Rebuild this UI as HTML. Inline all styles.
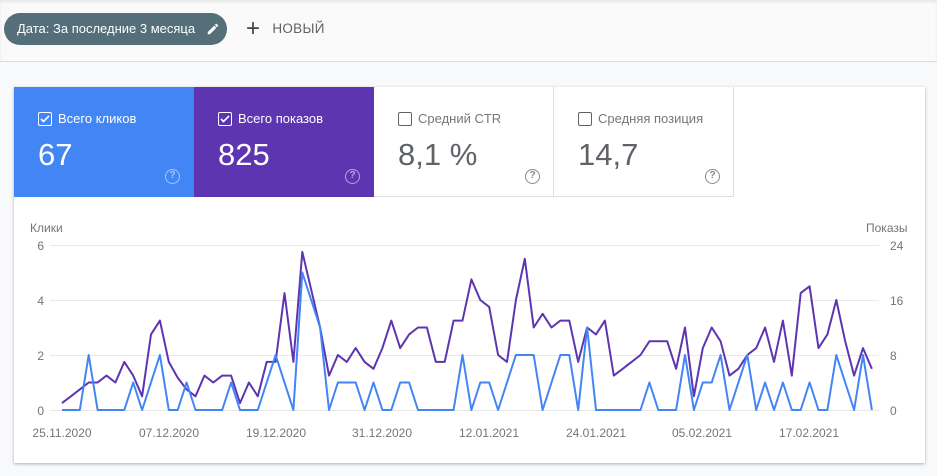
<!DOCTYPE html>
<html><head><meta charset="utf-8"><style>
*{box-sizing:border-box;margin:0;padding:0}
body{width:937px;height:476px;background:#f8f9fa;font-family:"Liberation Sans",sans-serif;position:relative;overflow:hidden}
.top{position:absolute;left:0;top:0;width:937px;height:62px;background:#fafafa;border-bottom:1px solid #dadce0;box-shadow:inset 0 2px 3px rgba(0,0,0,.08)}
.chip{position:absolute;left:4px;top:13px;width:223px;height:32px;border-radius:16px;background:#546e7a;color:#fff;font-size:13px;line-height:32px;padding-left:13px}
.new{position:absolute;left:246px;top:13px;line-height:32px;font-size:13.5px;color:#5f6368;letter-spacing:.3px}
.card{position:absolute;left:14px;top:87px;width:911px;height:376px;background:#fff;box-shadow:0 1px 3px rgba(0,0,0,.3)}
.tile{position:absolute;top:0;width:180px;height:110px}
.cb{position:absolute;left:24px;top:25px;width:14px;height:14px;border:1.5px solid #fff;border-radius:2px}
.lab{position:absolute;left:44px;top:24px;font-size:13px}
.num{position:absolute;left:24px;top:50px;font-size:31px}
.q{position:absolute;left:151px;top:82px;width:15px;height:15px;border:1.5px solid;border-radius:50%;font-size:10px;text-align:center;line-height:12px;font-weight:bold}
svg{position:absolute;left:0;top:0}
</style></head><body>
<div class="top"></div>
<div class="chip">Дата: За последние 3 месяца <svg style="position:absolute;left:202px;top:9px" width="14" height="14" viewBox="0 0 24 24"><path fill="#fff" d="M3 17.25V21h3.75L17.8 9.94l-3.75-3.75L3 17.25zM20.7 7.04a1 1 0 000-1.41l-2.34-2.34a1 1 0 00-1.41 0l-1.83 1.83 3.75 3.75 1.83-1.83z"/></svg></div>
<div class="new"><span style="font-size:24px;font-weight:300;vertical-align:-3px;margin-right:12px;color:#444">+</span>НОВЫЙ</div>
<div class="card">
<div class="tile" style="left:0;background:#4285f4;color:#fff"><div class="cb"><svg width="12" height="12" viewBox="0 0 12 12" style="left:0;top:0"><path d="M2 6l2.5 2.5L10 3" stroke="#fff" stroke-width="1.6" fill="none"/></svg></div><div class="lab">Всего кликов</div><div class="num">67</div><div class="q" style="color:rgba(255,255,255,.55)">?</div></div>
<div class="tile" style="left:180px;background:#5e35b1;color:#fff"><div class="cb"><svg width="12" height="12" viewBox="0 0 12 12" style="left:0;top:0"><path d="M2 6l2.5 2.5L10 3" stroke="#fff" stroke-width="1.6" fill="none"/></svg></div><div class="lab">Всего показов</div><div class="num">825</div><div class="q" style="color:rgba(255,255,255,.55)">?</div></div>
<div class="tile" style="left:360px;color:#5f6368;border-right:1px solid #e0e0e0;border-bottom:1px solid #e0e0e0"><div class="cb" style="border-color:#5f6368"></div><div class="lab" style="color:#777">Средний CTR</div><div class="num">8,1 %</div><div class="q" style="color:#888">?</div></div>
<div class="tile" style="left:540px;color:#5f6368;border-right:1px solid #e0e0e0;border-bottom:1px solid #e0e0e0"><div class="cb" style="border-color:#5f6368"></div><div class="lab" style="color:#777">Средняя позиция</div><div class="num">14,7</div><div class="q" style="color:#888">?</div></div>
</div>
<svg id="ch" width="937" height="476" font-family="Liberation Sans, sans-serif" font-size="12" fill="#757575">
<text x="30" y="232">Клики</text><text x="866" y="232">Показы</text>
<g stroke="#e8e8e8" stroke-width="1"><line x1="50" x2="879" y1="245.5" y2="245.5"/><line x1="50" x2="879" y1="300.5" y2="300.5"/><line x1="50" x2="879" y1="355.5" y2="355.5"/><line x1="50" x2="879" y1="410.5" y2="410.5"/></g>
<g text-anchor="end"><text x="44" y="250">6</text><text x="44" y="305">4</text><text x="44" y="360">2</text><text x="44" y="415">0</text></g>
<text x="890" y="250">24</text><text x="890" y="305">16</text><text x="890" y="360">8</text><text x="890" y="415">0</text>
<g text-anchor="middle"><text x="62" y="437">25.11.2020</text><text x="169" y="437">07.12.2020</text><text x="276" y="437">19.12.2020</text><text x="382" y="437">31.12.2020</text><text x="489" y="437">12.01.2021</text><text x="596" y="437">24.01.2021</text><text x="702" y="437">05.02.2021</text><text x="809" y="437">17.02.2021</text></g>
<polyline id="pu" fill="none" stroke="#5e35b1" stroke-width="2" stroke-linejoin="round"/>
<polyline id="bl" fill="none" stroke="#4285f4" stroke-width="2" stroke-linejoin="round"/>
</svg>
<script>
var c=[0,0,0,2,0,0,0,0,1,0,1,2,0,0,1,0,0,0,0,1,0,0,0,1,2,1,0,5,4,3,0,1,1,1,0,1,0,0,1,1,0,0,0,0,0,2,0,1,1,0,1,2,2,2,0,1,2,2,0,3,0,0,0,0,0,0,1,0,0,0,2,0,1,1,2,0,1,2,0,1,0,1,0,0,1,0,0,2,1,0,2,0];
var p=[1,2,3,4,4,5,4,7,5,2,11,13,7,4.7,3,2,5,4,5,5,1,4,2,7,7,17,7,23,17.5,12,5,8,7,9,7,6,9,13,9,11,12,12,7,7,13,13,19,16,15,8,7,16,22,12,14,12,13,13,7,12,11,13,5,6,7,8,10,10,10,6,12,2,9,12,10,5,6,8,9,12,7,13,5,17,18,9,11,16,10,5,9,6];
function pts(a,k){return a.map(function(v,i){return (62+i*8.9).toFixed(1)+','+(410-v*k).toFixed(1)}).join(' ')}
document.getElementById('bl').setAttribute('points',pts(c,27.5));
document.getElementById('pu').setAttribute('points',pts(p,6.875));
</script>
</body></html>
